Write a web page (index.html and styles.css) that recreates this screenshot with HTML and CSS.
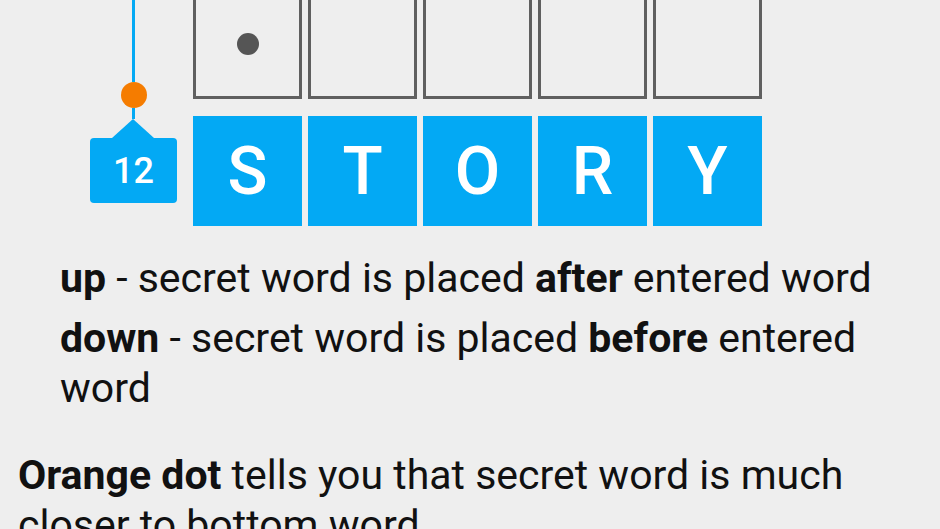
FILE: index.html
```html
<!DOCTYPE html>
<html lang="en">
<head>
	<meta charset="UTF-8">
	<title>How to play</title>
	<link rel="stylesheet" href="styles.css">
</head>
<body>
	<div id="wrapper">
		<!-- example board: guess row above, entered word below -->
		<div class="board">
			<div class="marker">
				<div class="stem top"></div>
				<div class="near"></div>
				<div class="stem"></div>
				<div class="tag">12</div>
			</div>
			<div class="rows">
				<div class="row">
					<div class="cell empty"><span class="pin"></span></div>
					<div class="cell empty"></div>
					<div class="cell empty"></div>
					<div class="cell empty"></div>
					<div class="cell empty"></div>
				</div>
				<div class="row">
					<div class="cell filled">S</div>
					<div class="cell filled">T</div>
					<div class="cell filled">O</div>
					<div class="cell filled">R</div>
					<div class="cell filled">Y</div>
				</div>
			</div>
		</div>

		<ul class="rules">
			<li><b>up</b> - secret word is placed <b>after</b> entered word</li>
			<li><b>down</b> - secret word is placed <b>before</b> entered word</li>
		</ul>

		<p class="hint"><b>Orange dot</b> tells you that secret word is much closer to bottom word.</p>
	</div>
</body>
</html>
```

FILE: styles.css
```css
body {
	margin: 0;
	background-color: #eee;
	font-family: Roboto, "Liberation Sans", sans-serif;
	color: #111;
	overflow: hidden;
}
#wrapper {
	padding: 0 18px;
}
b {
	font-weight: 700;
}

/* board */
.board {
	display: flex;
	align-items: flex-start;
	margin: -11px 0 0 72px;
}
.marker {
	width: 87px;
	margin-right: 16px;
	display: flex;
	flex-direction: column;
	align-items: center;
}
.stem {
	width: 3px;
	height: 11px;
	background-color: #03a9f4;
}
.stem.top {
	height: 93px;
}
.near {
	width: 26px;
	height: 26px;
	border-radius: 50%;
	background-color: #f57c00;
}
.tag {
	position: relative;
	width: 87px;
	height: 65px;
	margin-top: 19px;
	border-radius: 4px;
	background-color: #03a9f4;
	color: #fff;
	font-size: 36px;
	font-weight: 500;
	display: flex;
	align-items: center;
	justify-content: center;
}
.tag::before {
	content: "";
	position: absolute;
	left: 22px;
	top: -19px;
	border-left: 21px solid transparent;
	border-right: 21px solid transparent;
	border-bottom: 19px solid #03a9f4;
}
.rows {
	display: flex;
	flex-direction: column;
	gap: 17px;
}
.row {
	display: flex;
	gap: 6px;
}
.cell {
	box-sizing: border-box;
	width: 109px;
	height: 110px;
	display: flex;
	align-items: center;
	justify-content: center;
}
.cell.empty {
	border: 3px solid #5f5f5f;
}
.cell.filled {
	background-color: #03a9f4;
	color: #fff;
	font-size: 66px;
	font-weight: 500;
}
.pin {
	width: 22px;
	height: 22px;
	border-radius: 50%;
	background-color: #555;
}

/* text */
.rules {
	list-style: none;
	margin: 27px 0 0;
	padding: 0 0 0 42px;
	font-size: 41px;
	line-height: 50px;
}
.rules li {
	margin-bottom: 10px;
}
.hint {
	margin: 37px 0 0;
	font-size: 41px;
	line-height: 50px;
}
```
